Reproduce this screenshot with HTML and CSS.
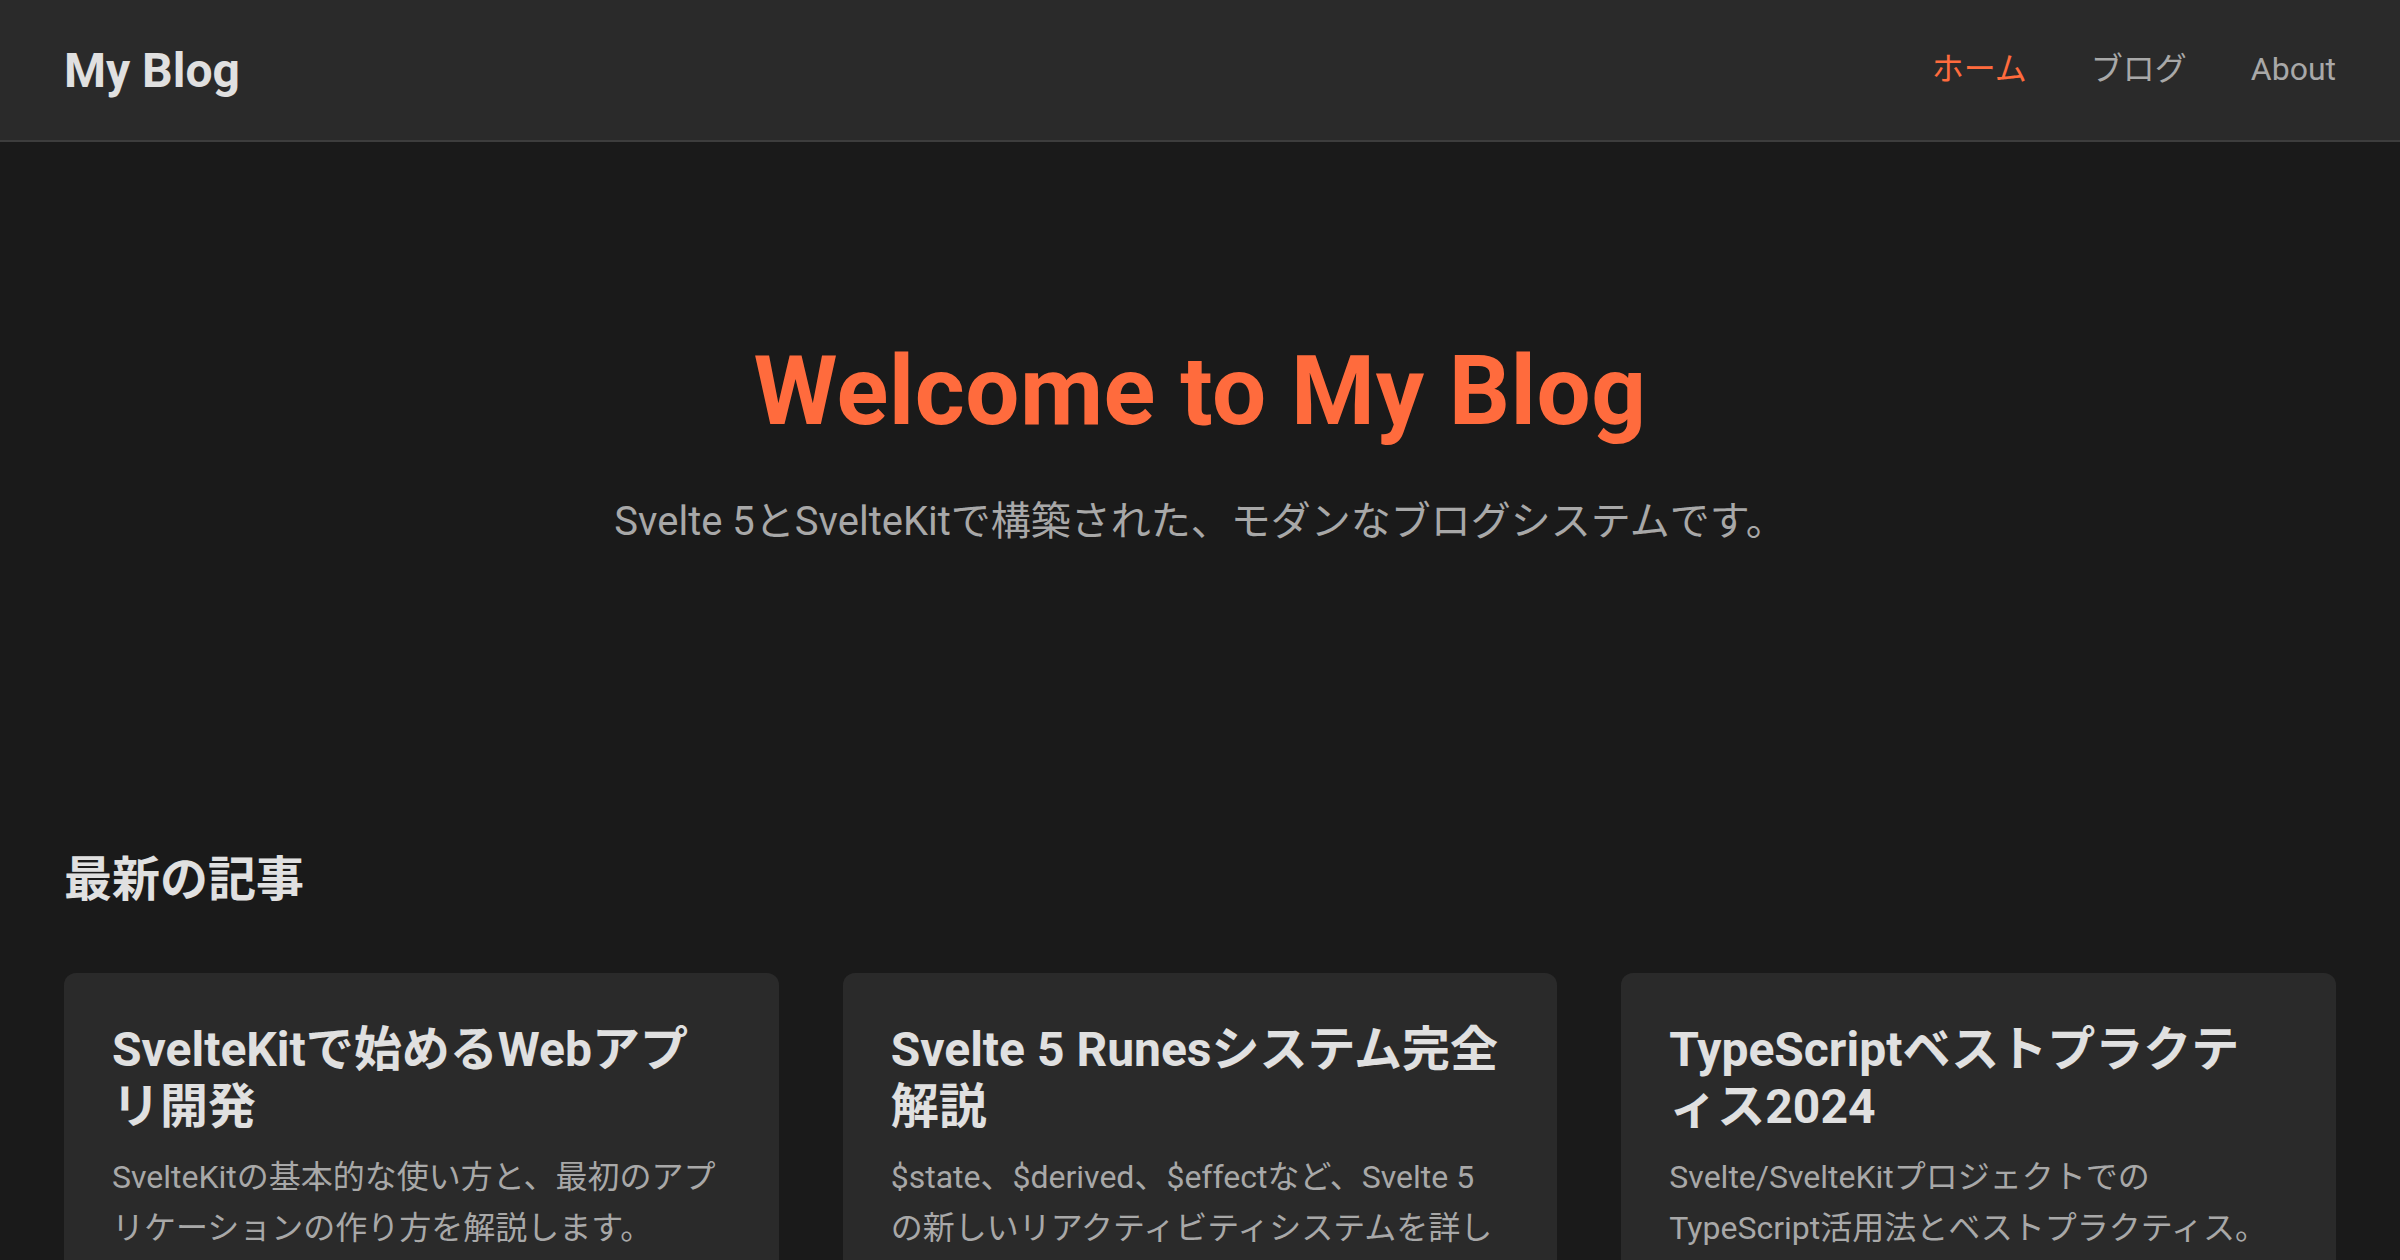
FILE: index.html
```html
<!DOCTYPE html>
<html lang="ja">
<head>
<meta charset="utf-8">
<title>My Blog</title>
<link rel="stylesheet" href="styles.css">
</head>
<body>
<header class="site-header">
  <a class="logo" href="#">My Blog</a>
  <nav class="nav">
    <a class="nav-link active" href="#">ホーム</a>
    <a class="nav-link" href="#">ブログ</a>
    <a class="nav-link" href="#">About</a>
  </nav>
</header>
<main class="main">
  <section class="hero">
    <h1 class="hero-title">Welcome to My Blog</h1>
    <p class="hero-sub">Svelte 5とSvelteKitで構築された、モダンなブログシステムです。</p>
  </section>
  <section class="latest">
    <h2 class="section-title">最新の記事</h2>
    <div class="cards">
      <article class="card">
        <h3 class="card-title">SvelteKitで始めるWebアプリ開発</h3>
        <p class="card-desc">SvelteKitの基本的な使い方と、最初のアプリケーションの作り方を解説します。</p>
        <time class="card-date">2024年1月15日</time>
      </article>
      <article class="card">
        <h3 class="card-title">Svelte 5 Runesシステム完全解説</h3>
        <p class="card-desc">$state、$derived、$effectなど、Svelte 5の新しいリアクティビティシステムを詳しく解説します。</p>
        <time class="card-date">2024年1月20日</time>
      </article>
      <article class="card">
        <h3 class="card-title">TypeScriptベストプラクティス2024</h3>
        <p class="card-desc">Svelte/SvelteKitプロジェクトでのTypeScript活用法とベストプラクティス。</p>
        <time class="card-date">2024年1月25日</time>
      </article>
    </div>
  </section>
</main>
</body>
</html>
```

FILE: styles.css
```css
* { box-sizing: border-box; }

html, body {
  margin: 0;
  padding: 0;
  background: #1a1a1a;
  color: #e0e0e0;
  font-family: "Roboto", "Noto Sans CJK JP", sans-serif;
}

a { text-decoration: none; color: inherit; }

.site-header {
  height: 142px;
  background: #2a2a2a;
  border-bottom: 2px solid #3d3d3d;
  display: flex;
  align-items: center;
  justify-content: space-between;
  padding: 0 64px;
}

.logo {
  font-size: 48px;
  font-weight: 700;
  color: #e0e0e0;
}

.nav {
  display: flex;
  align-items: baseline;
  gap: 64px;
  padding-bottom: 8px;
}

.nav-link {
  font-size: 32px;
  color: #a8a8a8;
}

.nav-link.active {
  color: #ff6b3d;
}

.main {
  padding: 64px 64px;
}

.hero {
  text-align: center;
  padding: 128px 0;
  margin-bottom: 169px;
}

.hero-title {
  margin: 0 0 41px;
  font-size: 96px;
  line-height: 1.2;
  font-weight: 700;
  color: #ff6b3d;
  letter-spacing: 0.5px;
}

.hero-sub {
  margin: 0;
  font-size: 40px;
  line-height: 1.6;
  color: #a8a8a8;
}

.section-title {
  margin: 0 0 64px;
  font-size: 48px;
  line-height: 1.2;
  font-weight: 700;
  color: #e0e0e0;
}

.cards {
  display: grid;
  grid-template-columns: repeat(3, 1fr);
  gap: 64px;
}

.card {
  background: #2a2a2a;
  border-radius: 12px;
  padding: 48px 59.5px 48px 48px;
}

.card-title {
  margin: 0 -2.5px 16px 0;
  font-size: 48px;
  line-height: 1.2;
  font-weight: 700;
  color: #e0e0e0;
}

.card-desc {
  margin: 0 0 32px;
  font-size: 32px;
  line-height: 1.6;
  color: #a8a8a8;
}

.card-date {
  font-size: 28px;
  color: #808080;
}
```
